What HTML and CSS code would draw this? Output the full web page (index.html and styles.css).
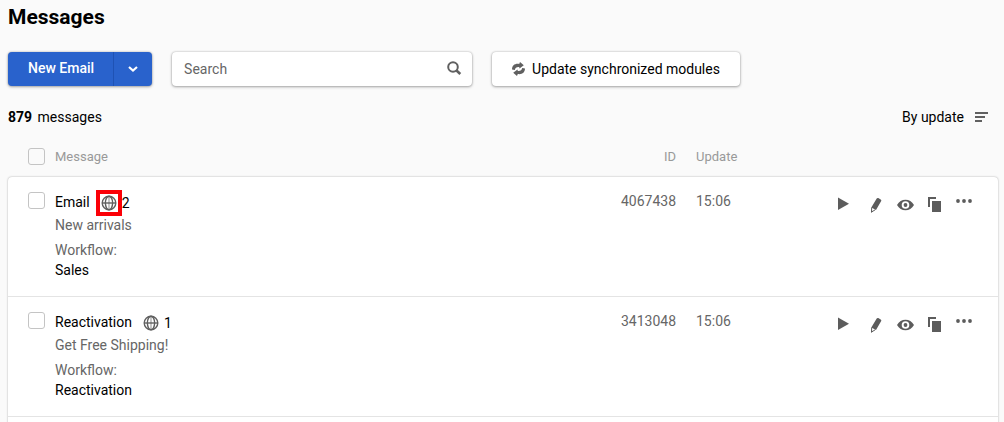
FILE: index.html
```html
<!DOCTYPE html>
<html lang="en">
<head>
<meta charset="utf-8">
<title>Messages</title>
<link rel="stylesheet" href="styles.css">
</head>
<body>
<svg class="symbols" aria-hidden="true">
  <symbol id="globe" viewBox="0 0 16 16"><g fill="none" stroke="currentColor" stroke-width="1.4"><circle cx="8" cy="8" r="6.800"/><ellipse cx="8" cy="8" rx="3.600" ry="6.800"/><path d="M1 8h14" stroke-width="1.400"/><path d="M8 1v14" stroke-width=".7"/></g></symbol>
  <symbol id="play" viewBox="0 0 30 20"><path d="M10 3.500v12.500L21 9.700z"/></symbol>
  <symbol id="pencil" viewBox="0 0 30 20"><path d="M18.700 4.600q.6-1 1.600-.5l2.400 1.300q1 .6.500 1.600L18 16l-4.700-2.500z"/><path d="M13.700 13.500l-.2 4.500 3.700-2.200" fill="none" stroke="currentColor" stroke-width="1"/><path d="M13.100 18.700l.2-2.400 1.700 1.200z"/></symbol>
  <symbol id="eye" viewBox="0 0 30 20"><path fill-rule="evenodd" d="M9 11C11 7.500 14 5.800 17.500 5.800S24 7.500 26 11c-2 3.500-5 5.200-8.500 5.200S11 14.500 9 11zM17.500 7.200a3.800 3.800 0 1 0 0 7.600 3.800 3.800 0 0 0 0-7.600z"/><circle cx="17.500" cy="11" r="1.900"/></symbol>
  <symbol id="copy" viewBox="0 0 30 20"><path d="M10 3h8v2h-6v8h-2zM14 7h9v11h-9z"/></symbol>
  <symbol id="dots" viewBox="0 0 30 20"><circle cx="10" cy="7" r="1.900"/><circle cx="16" cy="7" r="1.900"/><circle cx="22" cy="7" r="1.900"/></symbol>
</svg>
<main class="page">
  <h1 class="title">Messages</h1>
  <div class="toolbar">
    <div class="split">
      <button class="split-main" type="button">New Email</button>
      <button class="split-toggle" type="button" aria-label="More options"><svg width="12" height="8" viewBox="0 0 12 8"><path d="M2 2l4 3.500L10 2" fill="none" stroke="currentColor" stroke-width="2.200"/></svg></button>
    </div>
    <div class="search">
      <input class="search-input" type="text" placeholder="Search" aria-label="Search">
      <button class="search-button" type="button" aria-label="Search"><svg width="16" height="16" viewBox="0 0 16 16"><g fill="none" stroke="currentColor"><circle cx="7" cy="6" r="4.800" stroke-width="2"/><path d="M10.500 9.500l3.800 3.500" stroke-width="2.600"/></g></svg></button>
    </div>
    <button class="sync" type="button"><svg width="13" height="14" viewBox="0 0 13 14"><path d="M0 7.500C0 3.500 3 1.300 7.200 2L8 0l3.800 3.300L7.500 6.500 7.200 5C4.500 4.800 3.200 5.800 2.800 8zM13 6.500c0 4-3 6.200-7.200 5.500L5 14l-3.800-3.300L5.500 7.500l.3 1.500c2.700.2 4-.8 4.400-3z"/></svg>Update synchronized modules</button>
  </div>
  <div class="summary">
    <div class="count"><strong>879</strong> messages</div>
    <button class="sort" type="button">By update<svg width="13" height="10" viewBox="0 0 13 10"><path d="M0 0h13v2H0zM0 4h10v2H0zM0 8h7v2H0z"/></svg></button>
  </div>
  <table class="list">
    <thead>
      <tr class="row head">
        <th class="pick"><input class="check" type="checkbox" aria-label="Select all messages"></th>
        <th>Message</th>
        <th class="id">ID</th>
        <th>Update</th>
      </tr>
    </thead>
    <tbody class="card">
      <tr class="row item">
        <td class="pick"><input class="check" type="checkbox" aria-label="Select Email"></td>
        <td class="message">
          <div class="name">Email<span class="locales"><span class="marked"><svg class="globe"><use href="#globe"/></svg></span>2</span></div>
          <div class="subject">New arrivals</div>
          <div class="label">Workflow:</div>
          <div>Sales</div>
        </td>
        <td class="id">4067438</td>
        <td>15:06</td>
        <td class="actions">
          <button class="action" type="button" aria-label="Start"><svg class="icon"><use href="#play"/></svg></button>
          <button class="action" type="button" aria-label="Edit"><svg class="icon"><use href="#pencil"/></svg></button>
          <button class="action" type="button" aria-label="Preview"><svg class="icon"><use href="#eye"/></svg></button>
          <button class="action" type="button" aria-label="Copy"><svg class="icon"><use href="#copy"/></svg></button>
          <button class="action" type="button" aria-label="More"><svg class="icon"><use href="#dots"/></svg></button>
        </td>
      </tr>
      <tr class="row item">
        <td class="pick"><input class="check" type="checkbox" aria-label="Select Reactivation"></td>
        <td class="message">
          <div class="name">Reactivation<span class="locales spaced"><svg class="globe"><use href="#globe"/></svg>1</span></div>
          <div class="subject">Get Free Shipping!</div>
          <div class="label">Workflow:</div>
          <div>Reactivation</div>
        </td>
        <td class="id">3413048</td>
        <td>15:06</td>
        <td class="actions">
          <button class="action" type="button" aria-label="Start"><svg class="icon"><use href="#play"/></svg></button>
          <button class="action" type="button" aria-label="Edit"><svg class="icon"><use href="#pencil"/></svg></button>
          <button class="action" type="button" aria-label="Preview"><svg class="icon"><use href="#eye"/></svg></button>
          <button class="action" type="button" aria-label="Copy"><svg class="icon"><use href="#copy"/></svg></button>
          <button class="action" type="button" aria-label="More"><svg class="icon"><use href="#dots"/></svg></button>
        </td>
      </tr>
    </tbody>
  </table>
</main>
</body>
</html>
```

FILE: styles.css
```css
* { box-sizing: border-box; }
html { overflow: hidden; }
body {
  margin: 0;
  background: #fafafa;
  color: #000;
  font: 14px/20px Roboto, "Liberation Sans", sans-serif;
}
button, input { font: inherit; color: inherit; }
button { border: 0; padding: 0; background: none; cursor: pointer; }
svg { display: block; fill: currentColor; }
.symbols { display: none; }
.page { padding: 4px 6px 0 8px; }
.title { margin: 0; font-size: 21px; line-height: 26px; font-weight: 700; }

.toolbar { display: flex; gap: 20px; margin-top: 22px; }
.split, .search, .sync {
  height: 34px;
  border-radius: 4px;
  box-shadow: 0 0 2px rgba(0, 0, 0, .25), 0 1px 3px rgba(0, 0, 0, .3);
}
.split { display: flex; background: #2962cc; color: #fff; font-weight: 500; }
.split-main { padding: 0 19px 2px 20px; }
.split-toggle {
  display: flex;
  align-items: center;
  justify-content: center;
  width: 39px;
  border-left: 1px solid #1f52b4;
}
.search { display: flex; flex: 0 1 300px; background: #fff; }
.search-input {
  flex: 1;
  min-width: 0;
  padding: 0 12px;
  border: 0;
  border-radius: 4px;
  background: none;
}
.search-input::placeholder { color: #666; opacity: 1; }
.search-button { padding: 0 10px; color: #606060; }
.sync {
  display: flex;
  align-items: center;
  gap: 7px;
  padding: 0 20px 1px;
  background: #fff;
}
.sync svg { color: #606060; }

.summary { display: flex; justify-content: space-between; margin-top: 21px; }
.count strong { margin-right: 2px; }
.sort { display: flex; align-items: center; gap: 11px; margin-right: 10px; }
.sort svg { color: #606060; }

.list, .list thead, .card { display: block; }
.list { margin-top: 20px; }
.row { display: grid; grid-template-columns: 47px 1fr 80px 142px 170px; }
.row > * { padding: 0; text-align: left; font-weight: 400; }
.row > .id { padding-right: 10px; text-align: right; }
.row > .id + * { padding-left: 10px; }
.row > .pick { padding-left: 20px; }
.head { height: 30px; color: #999; font-size: 13px; }
.check {
  display: block;
  appearance: none;
  width: 17px;
  height: 17px;
  margin: 1px 0;
  border: 1px solid #c4c4c4;
  border-radius: 3px;
  background: #fff;
}
.head .check { background: #fafafa; }
.card {
  padding-bottom: 20px;
  border-radius: 4px;
  background: #fff;
  box-shadow: 0 0 2px rgba(0, 0, 0, .35);
}
.item { padding: 14px 0 16px; border-bottom: 1px solid #e4e4e4; color: #666; }
.message { color: #000; }
.name { display: flex; height: 22px; line-height: 22px; }
.locales { display: flex; align-items: center; height: 24px; margin-left: 6px; }
.spaced { gap: 5px; margin-left: 11px; }
.marked { padding: 1px; border: 4px solid #fb0007; }
.globe { width: 16px; height: 16px; color: #606060; }
.subject, .label { color: #666; }
.subject { margin: 2px 0 5px; }
.row > .actions { display: flex; align-items: flex-start; padding-top: 3px; }
.action { flex: 0 0 30px; height: 20px; color: #5c5c5c; }
.icon { width: 30px; height: 20px; }
```
